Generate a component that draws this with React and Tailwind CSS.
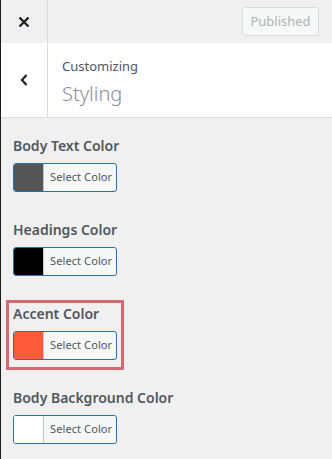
import React from 'react';

const font = { fontFamily: '"Noto Sans", "Open Sans", sans-serif' };

function ColorControl({ label, swatch }) {
  return (
    <div className="mb-[28px]">
      <div className="h-[20px] text-[14px] leading-[20px] font-semibold text-[#50575e]">{label}</div>
      <button className="mt-[7px] flex h-[29px] w-[104px] overflow-hidden rounded-[3px] border border-[#2271b1] bg-[#f6f7f7]">
        <span className={`h-full w-[30px] shrink-0 border-r border-[#c3c4c7] ${swatch}`} />
        <span className="flex h-full items-center pl-[6px] text-[11px] tracking-[0.1px] text-[#50575e] whitespace-nowrap">Select Color</span>
      </button>
    </div>
  );
}

export default function App() {
  return (
    <div style={font} className="w-[332px] h-[459px] overflow-hidden border-l border-[#1d1d1d] bg-[#f0f0f1] flex flex-col">
      {/* top bar */}
      <header className="h-[43px] shrink-0 flex items-center">
        <div className="w-[47px] h-full border-r border-[#dcdcde] flex items-center justify-center">
          <svg viewBox="0 0 12 12" className="w-[12px] h-[12px]">
            <path d="M1.5 1.5 L10.5 10.5 M10.5 1.5 L1.5 10.5" stroke="#1d2327" strokeWidth="2.4" strokeLinecap="butt" />
          </svg>
        </div>
        <div className="flex-1" />
        <button className="mr-[13px] h-[29px] w-[77px] rounded-[3px] border border-[#dcdcde] bg-[#f6f7f7] text-[13px] text-[#b0b3b6]">
          Published
        </button>
      </header>

      {/* section title */}
      <div className="h-[75px] shrink-0 bg-white border-b border-[#dcdcde] flex">
        <div className="w-[47px] border-r border-[#dcdcde] flex items-center justify-center">
          <svg viewBox="0 0 8 12" className="w-[8px] h-[12px]">
            <path d="M6.5 1 L2 6 L6.5 11" fill="none" stroke="#1d2327" strokeWidth="2.2" />
          </svg>
        </div>
        <div className="pl-[14px] pt-[14px]">
          <div className="text-[13px] leading-[18px] text-[#50575e]">Customizing</div>
          <div className="mt-[6px] text-[20px] leading-[26px] font-light text-[#8c8f94]">Styling</div>
        </div>
      </div>

      {/* controls */}
      <div className="relative px-[12px] pt-[18px]">
        <ColorControl label="Body Text Color" swatch="bg-[#555555]" />
        <ColorControl label="Headings Color" swatch="bg-black" />
        <ColorControl label="Accent Color" swatch="bg-[#ff5a3c]" />
        <ColorControl label="Body Background Color" swatch="bg-white" />
        {/* highlight outline */}
        <div className="absolute left-[5px] top-[182px] w-[118px] h-[70px] border-[3px] border-[#d46a6f]" />
      </div>
    </div>
  );
}
